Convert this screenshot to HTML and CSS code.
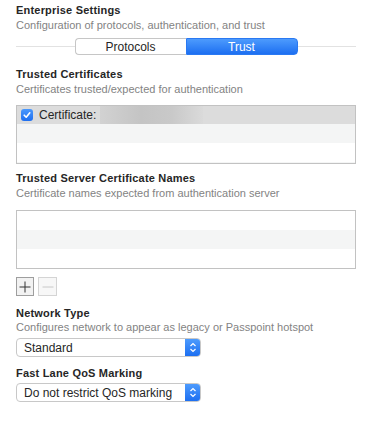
FILE: index.html
```html
<!DOCTYPE html>
<html lang="en">
<head>
    <meta charset="UTF-8">
    <title>Enterprise Settings</title>
    <link rel="stylesheet" href="styles.css">
</head>
<body>
    <div class="panel">
        <div class="section first">
            <div class="title">Enterprise Settings</div>
            <div class="subtitle">Configuration of protocols, authentication, and trust</div>
        </div>

        <div class="tabs">
            <div class="segmented">
                <div class="segment">Protocols</div>
                <div class="segment active">Trust</div>
            </div>
        </div>

        <div class="section certs">
            <div class="title">Trusted Certificates</div>
            <div class="subtitle">Certificates trusted/expected for authentication</div>
            <div class="list">
                <div class="row selected">
                    <span class="check">
                        <svg width="10" height="10" viewBox="0 0 10 10"><path d="M2.2 5.2 L4.2 7.2 L7.8 2.8" fill="none" stroke="#fff" stroke-width="1.6" stroke-linecap="round" stroke-linejoin="round"/></svg>
                    </span>
                    <span class="label">Certificate:</span>
                    <span class="blur"></span>
                </div>
                <div class="row alt"></div>
                <div class="row"></div>
                <div class="row alt"></div>
            </div>
        </div>

        <div class="section names">
            <div class="title">Trusted Server Certificate Names</div>
            <div class="subtitle">Certificate names expected from authentication server</div>
            <div class="list tall">
                <div class="row"></div>
                <div class="row alt"></div>
                <div class="row"></div>
            </div>
            <div class="buttons">
                <button class="btn">
                    <svg width="12" height="12" viewBox="0 0 12 12"><path d="M6 0.5 V11.5 M0.5 6 H11.5" stroke="#333" stroke-width="1"/></svg>
                </button>
                <button class="btn disabled">
                    <svg width="12" height="12" viewBox="0 0 12 12"><path d="M0.5 6 H11.5" stroke="#c8c8c8" stroke-width="1"/></svg>
                </button>
            </div>
        </div>

        <div class="section network">
            <div class="title">Network Type</div>
            <div class="subtitle tight">Configures network to appear as legacy or Passpoint hotspot</div>
            <div class="select">
                <span class="value">Standard</span>
                <span class="arrows">
                    <svg width="8" height="11" viewBox="0 0 8 11"><path d="M1.5 4 L4 1.5 L6.5 4 M1.5 7 L4 9.5 L6.5 7" fill="none" stroke="#fff" stroke-width="1.2"/></svg>
                </span>
            </div>
        </div>

        <div class="section qos">
            <div class="title">Fast Lane QoS Marking</div>
            <div class="select close">
                <span class="value">Do not restrict QoS marking</span>
                <span class="arrows">
                    <svg width="8" height="11" viewBox="0 0 8 11"><path d="M1.5 4 L4 1.5 L6.5 4 M1.5 7 L4 9.5 L6.5 7" fill="none" stroke="#fff" stroke-width="1.2"/></svg>
                </span>
            </div>
        </div>
    </div>
</body>
</html>
```

FILE: styles.css
```css
body {
    margin: 0;
    background-color: #fff;
    font-family: 'Liberation Sans', Arial, sans-serif;
    font-size: 11px;
    color: #262626;
}

.panel {
    padding: 4px 20px 0 16px;
}

.title {
    font-weight: bold;
    line-height: 13px;
    letter-spacing: 0.2px;
}

.subtitle {
    color: #838383;
    line-height: 13px;
    margin-top: 2px;
}

.subtitle.tight {
    margin-top: 1px;
}

.tabs {
    position: relative;
    display: flex;
    justify-content: center;
    margin-top: 6px;
}

.tabs::before {
    content: "";
    position: absolute;
    left: 0;
    right: 0;
    top: 8px;
    border-top: 1px solid #e2e2e2;
}

.segmented {
    position: relative;
    display: flex;
    width: 223px;
    height: 17px;
}

.segment {
    flex: 1;
    display: flex;
    align-items: center;
    justify-content: center;
    font-size: 12px;
    color: #262626;
    background: #fff;
    border: 1px solid #c6c6c6;
    border-radius: 4px 0 0 4px;
    border-right: none;
}

.segment.active {
    color: #fff;
    background: linear-gradient(#4d9bfd, #1d6ff1);
    border: 1px solid #2a79f2;
    border-radius: 0 4px 4px 0;
}

.section.certs {
    margin-top: 13px;
}

.section.names {
    margin-top: 8px;
}

.section.network {
    margin-top: 11px;
}

.section.qos {
    margin-top: 10px;
}

.list {
    margin-top: 9px;
    height: 57px;
    border: 1px solid #c2c2c2;
    overflow: hidden;
}

.list.tall {
    margin-top: 10px;
    height: 57px;
}

.row {
    display: flex;
    align-items: center;
    height: 19px;
    background: #fff;
}

.row.alt {
    background: #f4f5f5;
}

.row.selected {
    height: 18px;
    background: #dcdcdc;
}

.check {
    display: flex;
    align-items: center;
    justify-content: center;
    width: 12px;
    height: 12px;
    margin-left: 4px;
    border-radius: 3px;
    background: linear-gradient(#4a98fd, #1f6ff0);
}

.label {
    margin-left: 6px;
    font-size: 12px;
    color: #262626;
}

.blur {
    width: 103px;
    height: 18px;
    margin-left: 4px;
    background: linear-gradient(90deg, #d2d2d2, #c4c4c4 40%, #c9c9c9 70%, #dadada);
}

.buttons {
    display: flex;
    gap: 4px;
    margin-top: 8px;
}

.btn {
    display: flex;
    align-items: center;
    justify-content: center;
    width: 18px;
    height: 19px;
    padding: 0;
    border: 1px solid #9e9e9e;
    background: #f2f2f2;
}

.btn.disabled {
    width: 19px;
    border-color: #d4d4d4;
    background: #f7f7f7;
}

.select {
    display: flex;
    width: 185px;
    height: 19px;
    margin-top: 4px;
    border: 1px solid #c8c8c8;
    border-radius: 4px;
    box-sizing: border-box;
    overflow: hidden;
    background: #fff;
}

.select.close {
    margin-top: 3px;
}

.value {
    flex: 1;
    display: flex;
    align-items: center;
    padding-left: 7px;
    font-size: 12px;
    color: #262626;
}

.arrows {
    display: flex;
    align-items: center;
    justify-content: center;
    width: 15px;
    background: linear-gradient(#4d9bfd, #1d6ff1);
}
```
